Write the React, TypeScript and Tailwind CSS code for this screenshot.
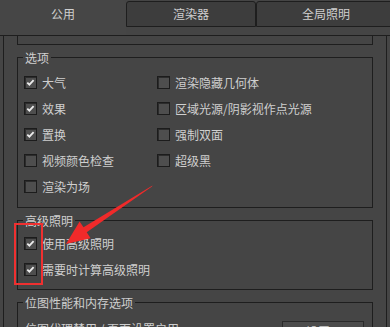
import React from "react";

function Box({ checked }: { checked?: boolean }) {
  return (
    <span className="flex h-[13px] w-[13px] shrink-0 items-center justify-center border border-[#1c1c1c] bg-[#4e4e4e] shadow-[inset_1px_1px_0_#2c2c2c]">
      {checked && (
        <svg width="9" height="9" viewBox="0 0 9 9">
          <path d="M1.3 4.6 L3.4 6.7 L7.6 2.2" stroke="#ececec" strokeWidth="1.8" fill="none" />
        </svg>
      )}
    </span>
  );
}

function Row({ label, checked }: { label: string; checked?: boolean }) {
  return (
    <div className="flex h-[26px] items-center gap-[5px]">
      <Box checked={checked} />
      <span className="whitespace-nowrap leading-[17px]">{label}</span>
    </div>
  );
}

function Legend({ text }: { text: string }) {
  return (
    <span className="absolute left-[5px] top-[-9px] bg-[#454545] px-[2px] leading-[17px] whitespace-nowrap">
      {text}
    </span>
  );
}

export default function App() {
  return (
    <div className="relative h-[327px] w-[390px] overflow-hidden bg-[#454545] text-[12px] text-[#cfcfcf] font-['Noto_Sans_CJK_SC','Noto_Sans',sans-serif]">
      {/* tabs */}
      <div className="flex h-[36px] border-b border-[#1e1e1e]">
        <div className="flex w-[126px] shrink-0 justify-center pt-[5px] leading-[17px] rounded-tr-[3px] bg-[#464646]">公用</div>
        <div className="mt-[1px] flex h-[26px] w-[130px] shrink-0 items-center justify-center rounded-t-[3px] border border-[#1e1e1e] bg-[#3d3d3d]">渲染器</div>
        <div className="mt-[1px] flex h-[26px] w-[140px] shrink-0 items-center justify-center rounded-t-[3px] border border-[#1e1e1e] bg-[#3d3d3d]">全局照明</div>
      </div>

      {/* content */}
      <div className="ml-[3px] flex h-[291px] w-[384px] flex-col border-x border-[#1e1e1e] px-[13px]">
        <div className="h-[9px] shrink-0 border-x border-b border-[#1e1e1e]" />

        <div className="relative mt-[12px] h-[151px] shrink-0 border border-[#1e1e1e] pl-[6px] pt-[11px]">
          <Legend text="选项" />
          <div className="flex">
            <div className="flex w-[133px] shrink-0 flex-col">
              <Row label="大气" checked />
              <Row label="效果" checked />
              <Row label="置换" checked />
              <Row label="视频颜色检查" />
              <Row label="渲染为场" />
            </div>
            <div className="flex flex-col">
              <Row label="渲染隐藏几何体" />
              <Row label="区域光源/阴影视作点光源" />
              <Row label="强制双面" />
              <Row label="超级黑" />
            </div>
          </div>
        </div>

        <div className="relative mt-[12px] h-[70px] shrink-0 border border-[#1e1e1e] pl-[6px] pt-[9px]">
          <Legend text="高级照明" />
          <Row label="使用高级照明" checked />
          <Row label="需要时计算高级照明" checked />
        </div>

        <div className="relative mt-[12px] flex-1 border-x border-t border-[#1e1e1e] pl-[7px] pr-[8px] pt-[17px]">
          <Legend text="位图性能和内存选项" />
          <div className="flex items-start">
            <span className="leading-[17px] whitespace-nowrap">位图代理禁用 / 页面设置启用</span>
            <div className="ml-auto mt-[1px] flex h-[22px] w-[82px] items-center justify-center border border-[#2a2a2a] bg-[#4c4c4c]">设置...</div>
          </div>
        </div>
      </div>

      {/* annotations */}
      <div className="pointer-events-none absolute left-[14px] top-[223px] h-[62px] w-[29px] border-2 border-[#f03030]" />
      <svg className="pointer-events-none absolute left-0 top-0" width="390" height="327" viewBox="0 0 390 327">
        <polygon
          points="152.5,185.6 152,186.6 86.7,232.3 90.6,238.2 66,244 79.6,221.4 83.5,227.3"
          fill="#f02a2a"
        />
      </svg>
    </div>
  );
}
